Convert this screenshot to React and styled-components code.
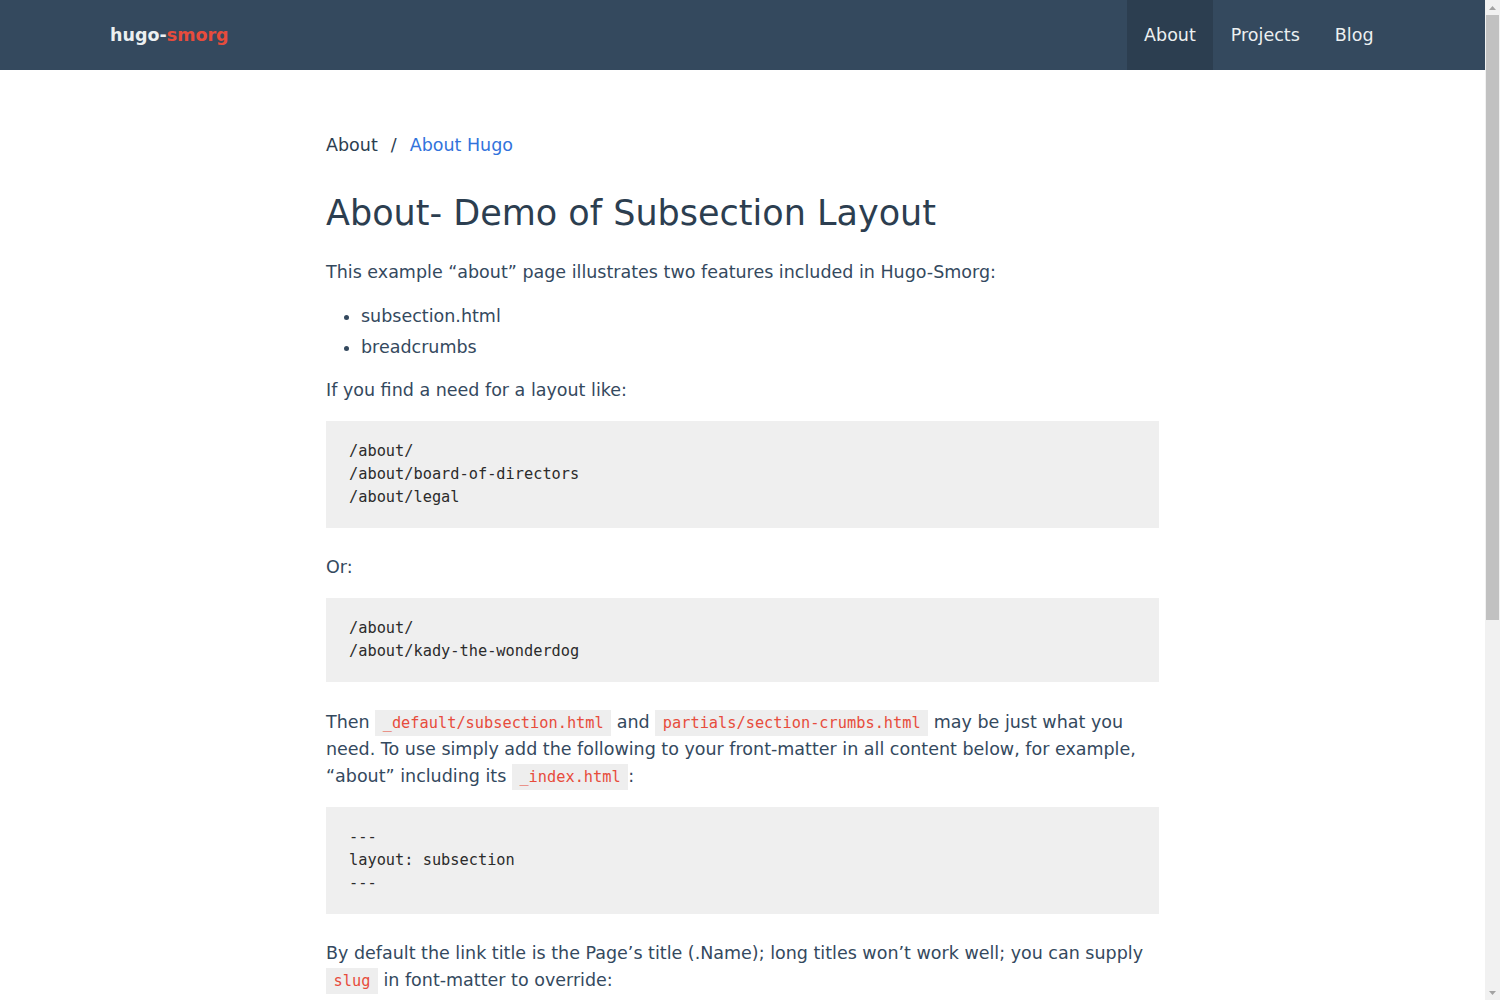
import React from "react";
import styled, { createGlobalStyle } from "styled-components";

const GlobalStyle = createGlobalStyle`
  html, body {
    margin: 0;
    height: 100%;
    overflow: hidden;
  }
  body {
    background: #ffffff;
    font-family: "DejaVu Sans", "Noto Sans", sans-serif;
    font-size: 17.5px;
    line-height: 27px;
    color: #34495e;
  }
`;

const Frame = styled.div`
  display: flex;
  height: 100vh;
`;

const Content = styled.div`
  flex: 1;
  min-width: 0;
  overflow: hidden;
`;

const ScrollTrack = styled.div`
  width: 15px;
  flex: none;
  display: flex;
  flex-direction: column;
  background: #f1f1f1;
`;

const ScrollArrow = styled.div`
  height: 15px;
  display: flex;
  align-items: center;
  justify-content: center;
  flex: none;
`;

const ScrollThumb = styled.div`
  height: 605px;
  margin: 0 1px;
  background: #c1c1c1;
`;

const ScrollRest = styled.div`
  flex: 1;
`;

const Navbar = styled.nav`
  height: 70px;
  background: #34495e;
  display: flex;
  align-items: stretch;
  justify-content: space-between;
  padding: 0 94px 0 93px;
`;

const Brand = styled.a`
  display: flex;
  align-items: center;
  padding: 0 17px;
  font-size: 17.5px;
  font-weight: bold;
  color: #ecf0f1;
  text-decoration: none;

  span {
    color: #e74c3c;
  }
`;

const NavLinks = styled.div`
  display: flex;
  align-items: stretch;
`;

const NavLink = styled.a`
  display: flex;
  align-items: center;
  padding: 0 17.5px;
  font-size: 17.5px;
  color: #ecf0f1;
  text-decoration: none;
  background: ${(p) => (p.$active ? "#2c3e50" : "transparent")};
`;

const Main = styled.main`
  width: 833px;
  margin: 0 auto;
  padding: 62px 0 80px;
`;

const Crumbs = styled.ol`
  display: flex;
  list-style: none;
  margin: 0 0 34px;
  padding: 0;
  line-height: 27px;
`;

const Crumb = styled.li`
  color: #2c3e50;

  & + &::before {
    content: "/";
    margin: 0 13px 0 13px;
    color: #2c3e50;
  }

  a {
    color: #3273dc;
    text-decoration: none;
  }
`;

const Title = styled.h1`
  margin: 0 0 25px;
  font-size: 35px;
  line-height: 40.5px;
  font-weight: normal;
  color: #2c3e50;
`;

const Para = styled.p`
  margin: 0 0 17px;
`;

const List = styled.ul`
  margin: 0 0 16px;
  padding-left: 35px;

  li + li {
    margin-top: 4px;
  }
`;

const Pre = styled.pre`
  margin: 0 0 26.5px;
  padding: 19px 23px;
  background: #efefef;
  font-family: "DejaVu Sans Mono", "Liberation Mono", monospace;
  font-size: 15.3px;
  line-height: 23px;
  color: #2b2b2b;
  white-space: pre;
`;

const Code = styled.code`
  padding: 4px 7.5px;
  background: #eeeeee;
  color: #e74c3c;
  font-family: "DejaVu Sans Mono", "Liberation Mono", monospace;
  font-size: 15.3px;
  line-height: 1;
`;

const Footer = styled.footer`
  border-top: 1px solid #e5e5e5;
  background: #fafafa;
  padding: 40px 0;
  text-align: center;
  font-size: 15px;
  color: #7f8c8d;
`;

const Arrow = ({ up }) => (
  <svg width="7" height="4" viewBox="0 0 7 4">
    <path d={up ? "M0 4 L3.5 0 L7 4 Z" : "M0 0 L3.5 4 L7 0 Z"} fill="#a3a3a3" />
  </svg>
);

export default function App() {
  return (
    <Frame>
      <GlobalStyle />
      <Content>
        <Navbar>
          <Brand href="#">
            hugo-<span>smorg</span>
          </Brand>
          <NavLinks>
            <NavLink href="#" $active>
              About
            </NavLink>
            <NavLink href="#">Projects</NavLink>
            <NavLink href="#">Blog</NavLink>
          </NavLinks>
        </Navbar>
        <Main>
          <Crumbs>
            <Crumb>About</Crumb>
            <Crumb>
              <a href="#">About Hugo</a>
            </Crumb>
          </Crumbs>
          <Title>About- Demo of Subsection Layout</Title>
          <Para>
            This example “about” page illustrates two features included in
            Hugo-Smorg:
          </Para>
          <List>
            <li>subsection.html</li>
            <li>breadcrumbs</li>
          </List>
          <Para>If you find a need for a layout like:</Para>
          <Pre>{`/about/
/about/board-of-directors
/about/legal`}</Pre>
          <Para>Or:</Para>
          <Pre>{`/about/
/about/kady-the-wonderdog`}</Pre>
          <Para>
            Then <Code>_default/subsection.html</Code> and{" "}
            <Code>partials/section-crumbs.html</Code> may be just what you
            need. To use simply add the following to your front-matter in all
            content below, for example, “about” including its{" "}
            <Code>_index.html</Code>:
          </Para>
          <Pre>{`---
layout: subsection
---`}</Pre>
          <Para>
            By default the link title is the Page’s title (.Name); long titles
            won’t work well; you can supply <Code>slug</Code> in font-matter to
            override:
          </Para>
          <Pre>{`---
layout: subsection
slug: About Hugo
---`}</Pre>
          <Para>
            The breadcrumbs are built from the section path, so every page
            below “about” shows a trail back to its parent.
          </Para>
        </Main>
        <Footer>hugo-smorg theme</Footer>
      </Content>
      <ScrollTrack>
        <ScrollArrow>
          <Arrow up />
        </ScrollArrow>
        <ScrollThumb />
        <ScrollRest />
        <ScrollArrow>
          <Arrow />
        </ScrollArrow>
      </ScrollTrack>
    </Frame>
  );
}
